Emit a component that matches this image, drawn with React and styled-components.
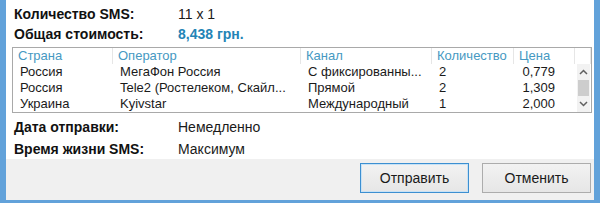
import React from "react";
import styled, { createGlobalStyle } from "styled-components";

const Global = createGlobalStyle`
  html, body {
    margin: 0;
    padding: 0;
    background: #ffffff;
  }
  body {
    font-family: "Liberation Sans", Arial, sans-serif;
    color: #1a1a1a;
  }
`;

const Window = styled.div`
  width: 600px;
  height: 203px;
  box-sizing: border-box;
  border-left: 6px solid #62a2da;
  border-right: 6px solid #62a2da;
  border-bottom: 3px solid #62a2da;
  display: flex;
  flex-direction: column;
  background: #ffffff;
`;

const Body = styled.div`
  flex: 1;
  display: flex;
  flex-direction: column;
  padding: 4px 2px 0 6px;
`;

const InfoGrid = styled.div`
  display: grid;
  grid-template-columns: 164px 1fr;
  padding-left: 2px;
  row-gap: ${(p) => p.$gap || 0}px;
`;

const Label = styled.div`
  font-weight: bold;
  font-size: 14px;
  line-height: 20px;
  color: #111;
`;

const Value = styled.div`
  font-size: 14px;
  line-height: 20px;
  color: ${(p) => (p.$accent ? "#2384b6" : "#1a1a1a")};
  font-weight: ${(p) => (p.$accent ? "bold" : "normal")};
`;

const ListBox = styled.div`
  margin: 3px 0 4px 0;
  border: 1px solid #a9a9a9;
  height: 66px;
  box-sizing: border-box;
  display: flex;
  flex-direction: column;
  font-size: 13px;
`;

const cols = "100px 188px 131px 82px 61px 1fr";

const HeaderRow = styled.div`
  display: grid;
  grid-template-columns: ${cols};
  height: 16px;
`;

const HeadCell = styled.div`
  padding-left: 5px;
  color: #4699c2;
  line-height: 16px;
  border-right: 1px solid #e6e6e6;
  white-space: nowrap;
  overflow: hidden;
`;

const Rows = styled.div`
  flex: 1;
  display: flex;
`;

const RowList = styled.div`
  flex: 1;
  display: flex;
  flex-direction: column;
`;

const Row = styled.div`
  display: grid;
  grid-template-columns: 100px 188px 131px 82px 61px;
  height: 16px;
  line-height: 16px;
`;

const Cell = styled.div`
  padding-left: ${(p) => (p.$right ? "0" : "7px")};
  padding-right: ${(p) => (p.$right ? "20px" : "0")};
  text-align: ${(p) => (p.$right ? "right" : "left")};
  white-space: nowrap;
  overflow: hidden;
  color: #1a1a1a;
`;

const ScrollBar = styled.div`
  width: 15px;
  margin: 0 1px 0 2px;
  background: #f2f2f2;
  display: flex;
  flex-direction: column;
  align-items: stretch;
`;

const Arrow = styled.div`
  height: 16px;
  display: flex;
  align-items: center;
  justify-content: center;
`;

const Thumb = styled.div`
  height: 16px;
  background: #cdcdcd;
  margin: 0 1px;
`;

const Track = styled.div`
  flex: 1;
`;

const Footer = styled.div`
  height: 42px;
  background: #f0f0f0;
  display: flex;
  justify-content: flex-end;
  align-items: flex-start;
  gap: 13px;
  padding: 4px 3px 0 0;
  box-sizing: border-box;
`;

const Button = styled.button`
  width: 109px;
  height: 30px;
  font-family: "Liberation Sans", Arial, sans-serif;
  font-size: 14px;
  color: #1a1a1a;
  background: linear-gradient(#f2f2f2, #e6e6e6);
  border: 1px solid ${(p) => (p.$default ? "#3c8fd1" : "#acacac")};
  box-shadow: ${(p) => (p.$default ? "inset 0 0 0 1px #c8e2f5" : "none")};
  padding: 0;
`;

const Chevron = ({ up }) => (
  <svg width="9" height="6" viewBox="0 0 9 6">
    <path
      d={up ? "M1 5 L4.5 1.5 L8 5" : "M1 1 L4.5 4.5 L8 1"}
      fill="none"
      stroke="#606060"
      strokeWidth="1.5"
    />
  </svg>
);

const rows = [
  ["Россия", "МегаФон Россия", "С фиксированны...", "2", "0,779"],
  ["Россия", "Tele2 (Ростелеком, Скайл...", "Прямой", "2", "1,309"],
  ["Украина", "Kyivstar", "Международный", "1", "2,000"],
];

export default function App() {
  return (
    <>
      <Global />
      <Window>
        <Body>
          <InfoGrid>
            <Label>Количество SMS:</Label>
            <Value>11 x 1</Value>
            <Label>Общая стоимость:</Label>
            <Value $accent>8,438 грн.</Value>
          </InfoGrid>
          <ListBox>
            <HeaderRow>
              <HeadCell>Страна</HeadCell>
              <HeadCell>Оператор</HeadCell>
              <HeadCell>Канал</HeadCell>
              <HeadCell>Количество</HeadCell>
              <HeadCell>Цена</HeadCell>
              <HeadCell />
            </HeaderRow>
            <Rows>
              <RowList>
                {rows.map((r, i) => (
                  <Row key={i}>
                    <Cell>{r[0]}</Cell>
                    <Cell>{r[1]}</Cell>
                    <Cell>{r[2]}</Cell>
                    <Cell>{r[3]}</Cell>
                    <Cell $right>{r[4]}</Cell>
                  </Row>
                ))}
              </RowList>
              <ScrollBar>
                <Arrow>
                  <Chevron up />
                </Arrow>
                <Thumb />
                <Track />
                <Arrow>
                  <Chevron />
                </Arrow>
              </ScrollBar>
            </Rows>
          </ListBox>
          <InfoGrid $gap={2}>
            <Label>Дата отправки:</Label>
            <Value>Немедленно</Value>
            <Label>Время жизни SMS:</Label>
            <Value>Максимум</Value>
          </InfoGrid>
        </Body>
        <Footer>
          <Button $default>Отправить</Button>
          <Button>Отменить</Button>
        </Footer>
      </Window>
    </>
  );
}
